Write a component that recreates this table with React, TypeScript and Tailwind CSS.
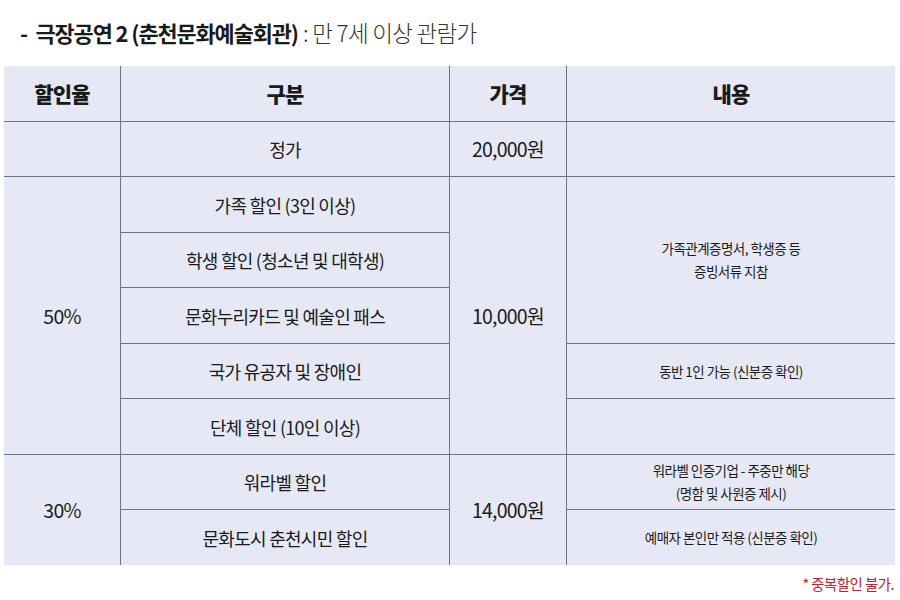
import React from "react";

const font = { fontFamily: '"Noto Sans CJK KR", "Noto Sans", sans-serif' };

function Cell({ className = "", children }: { className?: string; children?: React.ReactNode }) {
  return (
    <div className={`bg-[#e6e9f5] flex items-center justify-center text-center text-[#1a1a1a] ${className}`}>
      {children}
    </div>
  );
}

export default function App() {
  const body = "text-[18px] tracking-[-0.04em] leading-none";
  const num = "text-[19.5px] tracking-[-0.04em] leading-none";
  const note = "text-[13.5px] tracking-[-0.04em] leading-[23px]";
  const head = "text-[21px] font-black tracking-[-0.04em]";
  return (
    <div className="w-[900px] h-[600px] bg-white relative" style={font}>
      <div className="h-[66px] flex items-center pl-[20px] pb-[1px]">
        <span className="text-[22px] font-bold text-[#1a1a1a] whitespace-pre">
          <span className="tracking-[-0.04em]">-  </span>
          <span className="text-[21.9px] tracking-[-0.05em]">극장공연 2 (춘천문화예술회관)</span>
        </span>
        <span className="text-[22.5px] font-light tracking-[-0.03em] text-[#333] ml-[5px]">: 만 7세 이상 관람가</span>
      </div>
      <div className="ml-[4px] w-[891px] grid grid-cols-[116px_328px_116px_328px] grid-rows-[55px_54px_55px_54px_55px_54px_55px_54px_55px] gap-px bg-[#6f7280]">
        <Cell className={head}>할인율</Cell>
        <Cell className={head}>구분</Cell>
        <Cell className={head}>가격</Cell>
        <Cell className={head}>내용</Cell>

        <Cell />
        <Cell className={body}>정가</Cell>
        <Cell className={num}>20,000원</Cell>
        <Cell />

        <Cell className={`${num} row-span-5`}>50%</Cell>
        <Cell className={body}>가족 할인 (3인 이상)</Cell>
        <Cell className={`${num} row-span-5`}>10,000원</Cell>
        <Cell className={`${note} row-span-3`}>
          <div>
            가족관계증명서, 학생증 등
            <br />
            증빙서류 지참
          </div>
        </Cell>

        <Cell className={body}>학생 할인 (청소년 및 대학생)</Cell>
        <Cell className={body}>문화누리카드 및 예술인 패스</Cell>
        <Cell className={body}>국가 유공자 및 장애인</Cell>
        <Cell className={note}>동반 1인 가능 (신분증 확인)</Cell>
        <Cell className={body}>단체 할인 (10인 이상)</Cell>
        <Cell />

        <Cell className={`${num} row-span-2`}>30%</Cell>
        <Cell className={body}>워라벨 할인</Cell>
        <Cell className={`${num} row-span-2`}>14,000원</Cell>
        <Cell className={note}>
          <div>
            워라벨 인증기업 - 주중만 해당
            <br />
            (명함 및 사원증 제시)
          </div>
        </Cell>
        <Cell className={body}>문화도시 춘천시민 할인</Cell>
        <Cell className={note}>예매자 본인만 적용 (신분증 확인)</Cell>
      </div>
      <div className="flex justify-end pr-[6px] mt-[8px]">
        <span className="text-[14.5px] tracking-[-0.04em] text-[#c8202f]">* 중복할인 불가.</span>
      </div>
    </div>
  );
}
